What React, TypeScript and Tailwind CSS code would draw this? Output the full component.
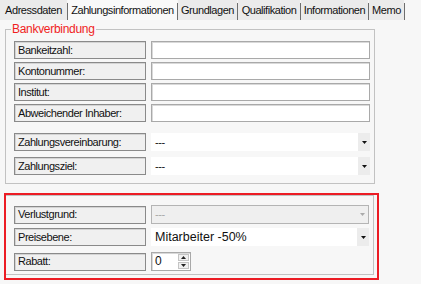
const font = { fontFamily: '"Liberation Sans", Arial, sans-serif' }

const tabs = [
    { name: 'Adressdaten', w: 'w-[67px]' },
    { name: 'Zahlungsinformationen', w: 'w-[109px]', active: true },
    { name: 'Grundlagen', w: 'w-[59px]' },
    { name: 'Qualifikation', w: 'w-[62px]' },
    { name: 'Informationen', w: 'w-[67px]' },
    { name: 'Memo', w: 'w-[35px]' },
]

function Label({ text }: { text: string }) {
    return (
        <div className="w-[132px] h-[18px] shrink-0 flex items-center pl-[3px] bg-[#f0f0f0] border border-[#8a8a8a] shadow-[inset_1px_1px_0_#d4d4d4]">
            {text}
        </div>
    )
}

function TextBox() {
    return <div className="w-[219px] h-[18px] bg-white border border-[#a9a9a9] shadow-[inset_1px_1px_0_#d9d9d9]" />
}

function Arrow({ color = '#111' }: { color?: string }) {
    return (
        <svg width="5" height="3" viewBox="0 0 5 3">
            <path d="M0 0H5L2.5 3Z" fill={color} />
        </svg>
    )
}

function Combo({ value, big = false }: { value: string; big?: boolean }) {
    return (
        <div className="w-[219px] h-[18px] flex bg-white">
            <div className={`flex-1 flex items-center pl-[4px] ${big ? 'text-[12.5px] tracking-normal' : ''}`}>{value}</div>
            <div className="w-[12px] bg-[#ececec] flex items-center justify-center">
                <Arrow />
            </div>
        </div>
    )
}

function DisabledCombo() {
    return (
        <div className="w-[219px] h-[19px] flex bg-[#efefef] border border-[#b4b4b4]">
            <div className="flex-1 flex items-center pl-[3px] text-[#a8a8a8]">---</div>
            <div className="w-[12px] flex items-center justify-center">
                <Arrow color="#aaa" />
            </div>
        </div>
    )
}

function Spinner() {
    return (
        <div className="w-[40px] h-[19px] flex bg-white border border-[#a9a9a9] shadow-[inset_1px_1px_0_#d9d9d9]">
            <div className="flex-1 flex items-center pl-[3px] text-[12px] tracking-normal">0</div>
            <div className="w-[11px] flex flex-col m-[1px] gap-px">
                <div className="flex-1 bg-[#f0f0f0] border border-[#c4c4c4] flex items-center justify-center">
                    <svg width="5" height="3" viewBox="0 0 5 3"><path d="M0 3H5L2.5 0Z" fill="#222" /></svg>
                </div>
                <div className="flex-1 bg-[#f0f0f0] border border-[#c4c4c4] flex items-center justify-center">
                    <Arrow color="#222" />
                </div>
            </div>
        </div>
    )
}

export default function App() {
    return (
        <div
            className="relative w-[421px] h-[284px] overflow-hidden bg-[#f7f7f7] text-[11px] leading-[13px] tracking-[-0.45px] text-[#111]"
            style={font}
        >
            {/* tab strip */}
            <div className="flex h-[20px] bg-[#f7f7f7]">
                {tabs.map((t) => (
                    <div key={t.name} className="flex">
                        <div
                            className={`${t.w} flex items-center justify-center ${
                                t.active ? 'bg-[#f9f9f9]' : 'bg-[#ebebeb]'
                            }`}
                        >
                            {t.name}
                        </div>
                        <div className="w-px h-[17px] self-end bg-[#6e6e6e]" />
                    </div>
                ))}
            </div>

            {/* Bankverbindung */}
            <fieldset className="ml-[5px] mt-[3px] w-[369px] border border-[#c2c2c2] pl-[8px] pr-[4px] pt-[5px] pb-[8px]">
                <legend className="ml-[-3px] px-[1px] text-[#f01e1e] text-[12px] tracking-[-0.3px]">Bankverbindung</legend>
                <div className="flex flex-col gap-[3px]">
                    {['Bankeitzahl:', 'Kontonummer:', 'Institut:', 'Abweichender Inhaber:'].map((l) => (
                        <div key={l} className="flex gap-[5px]">
                            <Label text={l} />
                            <TextBox />
                        </div>
                    ))}
                </div>
                <div className="flex flex-col gap-[6px] mt-[11px]">
                    <div className="flex gap-[5px]">
                        <Label text="Zahlungsvereinbarung:" />
                        <Combo value="---" />
                    </div>
                    <div className="flex gap-[5px]">
                        <Label text="Zahlungsziel:" />
                        <Combo value="---" />
                    </div>
                </div>
            </fieldset>

            {/* second group */}
            <div className="ml-[5px] mt-[11px] w-[369px] border border-[#c2c2c2] pl-[8px] pr-[4px] pt-[9px] pb-[3px] flex flex-col">
                <div className="flex gap-[5px] items-center">
                    <Label text="Verlustgrund:" />
                    <DisabledCombo />
                </div>
                <div className="flex gap-[5px] mt-[4px]">
                    <Label text="Preisebene:" />
                    <Combo value="Mitarbeiter -50%" big />
                </div>
                <div className="flex gap-[5px] mt-[6px] items-center">
                    <Label text="Rabatt:" />
                    <Spinner />
                </div>
            </div>

            {/* highlight */}
            <div className="absolute left-[4px] top-[193px] w-[375px] h-[87px] border-2 border-[#ec1c24]" />
        </div>
    )
}
